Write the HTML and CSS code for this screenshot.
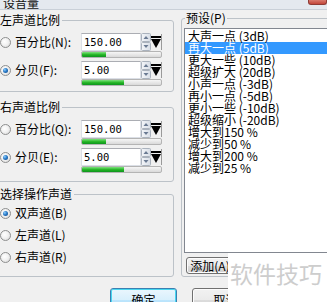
FILE: index.html
```html
<!DOCTYPE html>
<html lang="zh-CN">
<head>
<meta charset="utf-8">
<title>设音量</title>
<link rel="stylesheet" href="styles.css">
</head>
<body>
<div class="dialog">
  <div class="titlebar">
    <span class="title">设音量</span>
    <span class="close"></span>
  </div>
  <div class="body">
    <div class="left">
      <div class="group g1">
        <span class="legend">左声道比例</span>
        <div class="row">
          <div class="choice"><span class="radio"></span><span>百分比(N):</span></div>
          <div class="ctrl">
            <div class="field">
              <span class="input">150.00</span>
              <svg class="spin" width="10" height="18" viewBox="0 0 10 18"><defs><linearGradient id="sg" x1="0" y1="0" x2="1" y2="0"><stop offset="0" stop-color="#f4f6f9"/><stop offset="1" stop-color="#d7dde6"/></linearGradient></defs><rect x="0.5" y="0.5" width="9" height="8" rx="1" fill="url(#sg)" stroke="#aab2bd"/><rect x="0.5" y="9.5" width="9" height="8" rx="1" fill="url(#sg)" stroke="#aab2bd"/><path d="M2.5 6 L7.5 6 L5 3 Z" fill="#6a7a92"/><path d="M2.5 12 L7.5 12 L5 15 Z" fill="#6a7a92"/></svg>
              <svg class="drop" width="11" height="18" viewBox="0 0 11 18"><rect x="0" y="3" width="10" height="2" fill="#000"/><path d="M0 6 L10 6 L5 15 Z" fill="#000"/><path d="M10.5 1 L10.5 17" stroke="#9a9a9a"/></svg>
            </div>
            <div class="bar"><div class="fill" style="width:30%"></div></div>
          </div>
        </div>
        <div class="row">
          <div class="choice"><span class="radio on"></span><span>分贝(F):</span></div>
          <div class="ctrl">
            <div class="field">
              <span class="input">5.00</span>
              <svg class="spin" width="10" height="18" viewBox="0 0 10 18"><rect x="0.5" y="0.5" width="9" height="8" rx="1" fill="url(#sg)" stroke="#aab2bd"/><rect x="0.5" y="9.5" width="9" height="8" rx="1" fill="url(#sg)" stroke="#aab2bd"/><path d="M2.5 6 L7.5 6 L5 3 Z" fill="#6a7a92"/><path d="M2.5 12 L7.5 12 L5 15 Z" fill="#6a7a92"/></svg>
              <svg class="drop" width="11" height="18" viewBox="0 0 11 18"><rect x="0" y="3" width="10" height="2" fill="#000"/><path d="M0 6 L10 6 L5 15 Z" fill="#000"/><path d="M10.5 1 L10.5 17" stroke="#9a9a9a"/></svg>
            </div>
            <div class="bar"><div class="fill" style="width:53%"></div></div>
          </div>
        </div>
      </div>

      <div class="group g2">
        <span class="legend">右声道比例</span>
        <div class="row">
          <div class="choice"><span class="radio"></span><span>百分比(Q):</span></div>
          <div class="ctrl">
            <div class="field">
              <span class="input">150.00</span>
              <svg class="spin" width="10" height="18" viewBox="0 0 10 18"><rect x="0.5" y="0.5" width="9" height="8" rx="1" fill="url(#sg)" stroke="#aab2bd"/><rect x="0.5" y="9.5" width="9" height="8" rx="1" fill="url(#sg)" stroke="#aab2bd"/><path d="M2.5 6 L7.5 6 L5 3 Z" fill="#6a7a92"/><path d="M2.5 12 L7.5 12 L5 15 Z" fill="#6a7a92"/></svg>
              <svg class="drop" width="11" height="18" viewBox="0 0 11 18"><rect x="0" y="3" width="10" height="2" fill="#000"/><path d="M0 6 L10 6 L5 15 Z" fill="#000"/><path d="M10.5 1 L10.5 17" stroke="#9a9a9a"/></svg>
            </div>
            <div class="bar"><div class="fill" style="width:30%"></div></div>
          </div>
        </div>
        <div class="row">
          <div class="choice"><span class="radio on"></span><span>分贝(E):</span></div>
          <div class="ctrl">
            <div class="field">
              <span class="input">5.00</span>
              <svg class="spin" width="10" height="18" viewBox="0 0 10 18"><rect x="0.5" y="0.5" width="9" height="8" rx="1" fill="url(#sg)" stroke="#aab2bd"/><rect x="0.5" y="9.5" width="9" height="8" rx="1" fill="url(#sg)" stroke="#aab2bd"/><path d="M2.5 6 L7.5 6 L5 3 Z" fill="#6a7a92"/><path d="M2.5 12 L7.5 12 L5 15 Z" fill="#6a7a92"/></svg>
              <svg class="drop" width="11" height="18" viewBox="0 0 11 18"><rect x="0" y="3" width="10" height="2" fill="#000"/><path d="M0 6 L10 6 L5 15 Z" fill="#000"/><path d="M10.5 1 L10.5 17" stroke="#9a9a9a"/></svg>
            </div>
            <div class="bar"><div class="fill" style="width:53%"></div></div>
          </div>
        </div>
      </div>

      <div class="group g3">
        <span class="legend">选择操作声道</span>
        <div class="opts">
          <div class="opt"><span class="radio on"></span><span>双声道(B)</span></div>
          <div class="opt"><span class="radio"></span><span>左声道(L)</span></div>
          <div class="opt"><span class="radio"></span><span>右声道(R)</span></div>
        </div>
      </div>
    </div>

    <div class="right">
      <span class="legend">预设(P)</span>
      <ul class="list">
        <li>大声一点 (3dB)</li>
        <li class="sel">再大一点 (5dB)</li>
        <li>更大一些 (10dB)</li>
        <li>超级扩大 (20dB)</li>
        <li>小声一点 (-3dB)</li>
        <li>再小一点 (-5dB)</li>
        <li>更小一些 (-10dB)</li>
        <li>超级缩小 (-20dB)</li>
        <li>增大到150 %</li>
        <li>减少到50 %</li>
        <li>增大到200 %</li>
        <li>减少到25 %</li>
      </ul>
      <button class="btn small">添加(A)</button>
    </div>
  </div>

  <div class="buttons">
    <button class="btn default">确定</button>
    <button class="btn">取消</button>
  </div>

  <div class="watermark">软件技巧</div>
</div>
</body>
</html>
```

FILE: styles.css
```css
html, body {
  margin: 0;
  padding: 0;
  background: #f0f0f0;
}

.dialog {
  position: relative;
  width: 327px;
  height: 302px;
  overflow: hidden;
  background: #f0f0f0;
  font-family: "Noto Sans CJK SC", "Noto Sans", sans-serif;
  font-size: 12px;
  line-height: 12px;
  color: #000;
}

.titlebar {
  height: 9px;
  display: flex;
  justify-content: space-between;
  align-items: flex-end;
  overflow: hidden;
  background: #e4e9ef;
  border-bottom: 1px solid #c9d0d8;
}

.title {
  padding-left: 3px;
  line-height: 12px;
  color: #111;
}

.close {
  align-self: flex-start;
  width: 17px;
  height: 4px;
  background: linear-gradient(#d87a6e, #c2463a);
  border: 1px solid #8e3b35;
  border-top: none;
  border-radius: 0 0 3px 3px;
}

.body {
  display: flex;
  align-items: flex-start;
}

.left {
  flex: none;
  width: 182px;
  margin-left: -8px;
  display: flex;
  flex-direction: column;
}

.group {
  box-sizing: border-box;
  border: 1px solid #bcc2c8;
  border-radius: 3px;
  padding-left: 7px;
}

.g1 { margin-top: 10px; height: 72px; }
.g2 { margin-top: 15px; height: 75px; }
.g3 { margin-top: 12px; height: 83px; }

.legend {
  display: block;
  width: fit-content;
  margin: -7px 0 0 -2px;
  padding: 0 2px;
  background: #f0f0f0;
  line-height: 12px;
  white-space: nowrap;
}

.row {
  display: flex;
  margin-top: 3px;
}

.legend + .row {
  margin-top: 7px;
}

.choice, .opt {
  display: flex;
  align-items: center;
  gap: 4px;
  height: 18px;
  white-space: nowrap;
}

.choice {
  width: 81px;
  flex: none;
}

.radio {
  flex: none;
  box-sizing: border-box;
  width: 11px;
  height: 11px;
  border-radius: 50%;
  border: 1px solid #8e8f8f;
  background: radial-gradient(circle at 40% 40%, #ffffff 0%, #f2f2f2 45%, #d4d4d4 100%);
  display: flex;
  align-items: center;
  justify-content: center;
}

.radio.on::after {
  content: "";
  width: 5px;
  height: 5px;
  border-radius: 50%;
  background: radial-gradient(circle at 35% 35%, #8fd0ff 0%, #2a7bc8 45%, #0c3f7c 100%);
}

.ctrl {
  width: 81px;
  flex: none;
}

.field {
  display: flex;
  height: 18px;
}

.input {
  box-sizing: border-box;
  width: 60px;
  height: 18px;
  border: 1px solid #dbdfe6;
  border-top-color: #abadb3;
  background: #fff;
  padding-left: 2px;
  font-family: "DejaVu Sans Mono", "Liberation Mono", monospace;
  font-size: 10.5px;
  line-height: 16px;
}

.spin, .drop {
  display: block;
  flex: none;
}

.bar {
  box-sizing: border-box;
  width: 81px;
  height: 7px;
  border: 1px solid #b4b4b4;
  border-radius: 2px;
  background: linear-gradient(#f6f6f6, #d9d9d9);
  overflow: hidden;
}

.fill {
  height: 100%;
  background: linear-gradient(#7ee27e, #22b422 55%, #0e9420);
}

.opts {
  display: flex;
  flex-direction: column;
  gap: 4px;
  margin-top: 4px;
}

.right {
  flex: none;
  box-sizing: border-box;
  width: 170px;
  height: 259px;
  margin: 8px 0 0 7px;
  padding-left: 1px;
  border: 1px solid #bcc2c8;
  border-radius: 3px;
}

.right .legend {
  margin-left: 2px;
  padding: 0 1px;
}

.list {
  list-style: none;
  margin: 4px 0 0 1px;
  padding: 1px 0;
  box-sizing: border-box;
  height: 225px;
  background: #fff;
  border: 1px solid #828790;
}

.list li {
  height: 12px;
  line-height: 12px;
  padding-left: 3px;
  white-space: nowrap;
}

.list li.sel {
  background: #3399ff;
  color: #fff;
}

.btn {
  box-sizing: border-box;
  height: 23px;
  margin: 0;
  padding: 0;
  border: 1px solid #707070;
  border-radius: 3px;
  background: linear-gradient(#f2f2f2 0%, #ebebeb 50%, #dddddd 51%, #cfcfcf 100%);
  box-shadow: inset 0 0 0 1px #fcfcfc;
  font-family: "Noto Sans CJK SC", "Noto Sans", sans-serif;
  font-size: 12px;
  line-height: 20px;
  color: #000;
}

.btn.small {
  display: block;
  width: 48px;
  height: 17px;
  margin: 4px 0 0 3px;
  line-height: 14px;
}

.buttons {
  display: flex;
  gap: 15px;
  margin-top: 11px;
  padding-left: 110px;
}

.buttons .btn {
  width: 67px;
  flex: none;
}

.btn.default {
  border-color: #3c7fb1;
  background: linear-gradient(#eaf6fd 0%, #d9f0fc 50%, #bee6fd 51%, #a7d9f5 100%);
  box-shadow: inset 0 0 0 1px #48d7f0;
}

.watermark {
  position: absolute;
  left: 228px;
  top: 253px;
  right: 0;
  bottom: 0;
  background: #fff;
  color: #cdcdcd;
  font-size: 23px;
  line-height: 23px;
  padding: 9px 0 0 2px;
  white-space: nowrap;
}
```
